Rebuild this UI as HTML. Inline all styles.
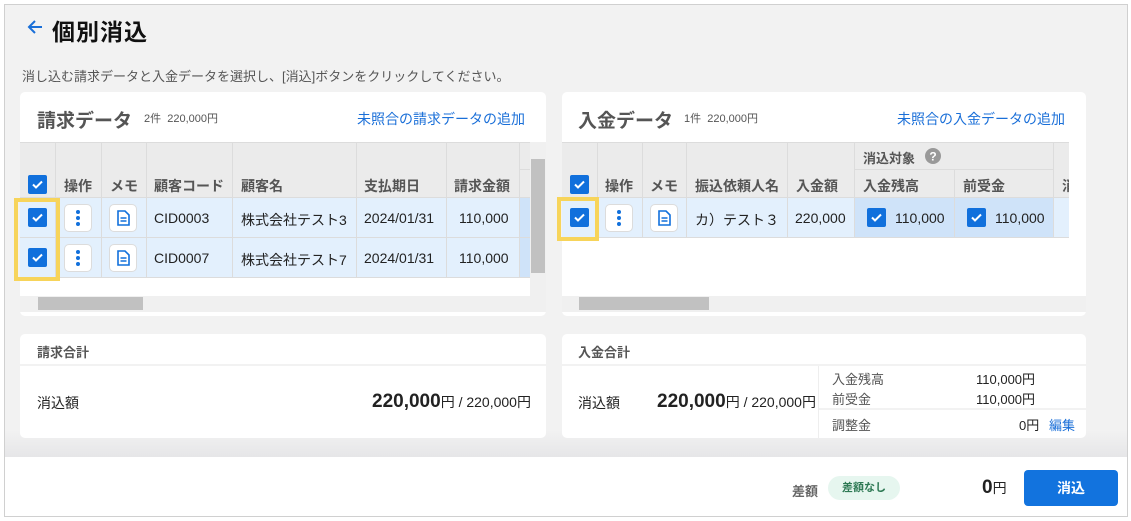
<!DOCTYPE html>
<html><head><meta charset="utf-8"><style>
*{box-sizing:border-box;margin:0;padding:0}
body{width:1131px;height:521px;background:#fff;font-family:"Liberation Sans","Noto Sans CJK JP",sans-serif;color:#222;position:relative;overflow:hidden;font-size:14px}
.a{position:absolute}
.frame{left:4px;top:4px;width:1124px;height:513px;border:1px solid #d0d0d0;background:#f2f2f2}
.footer{left:5px;top:457px;width:1122px;height:59px;background:#fff}
.shade{left:5px;top:430px;width:1122px;height:27px;background:linear-gradient(#f2f2f2,#e6e6e8)}
.panel{background:#fff;border-radius:5px}
.cb{position:absolute;width:19px;height:19px;background:#1170dc;border-radius:2px}
.cb svg{position:absolute;left:2px;top:2px}
.btn{position:absolute;width:28px;height:28px;border:1px solid #dcdcdc;border-radius:5px;background:#fff}
.th{position:absolute;font-size:14px;font-weight:bold;color:#555}
.td{position:absolute;font-size:14px;color:#222}
.vl{position:absolute;width:1px;background:#dcdcdc}
.hl{position:absolute;height:1px;background:#dcdcdc}
.lnk{color:#1a6fd8;font-size:14px}
</style></head><body>
<div class="a frame"></div>
<div class="a shade"></div>
<div class="a footer"></div>

<svg class="a" style="left:26px;top:18px" width="18" height="18" viewBox="0 0 18 18"><path d="M16 9H3M9 3L3 9l6 6" stroke="#1a6fd8" stroke-width="2" fill="none"/></svg>
<div class="a" style="left:52px;top:13px;font-size:23px;font-weight:bold;color:#111;letter-spacing:1px">個別消込</div>
<div class="a" style="left:22px;top:66px;font-size:13px;color:#555">消し込む請求データと入金データを選択し、[消込]ボタンをクリックしてください。</div>

<!-- LEFT PANEL -->
<div class="a panel" style="left:20px;top:92px;width:526px;height:224px"></div>
<div class="a" style="left:37px;top:106px;font-size:19px;font-weight:bold;color:#555">請求データ</div>
<div class="a" style="left:144px;top:110px;font-size:11px;color:#555">2件&nbsp;&nbsp;220,000円</div>
<div class="a lnk" style="left:357px;top:109px">未照合の請求データの追加</div>
<div class="a" style="left:20px;top:142px;width:510px;height:56px;background:#ebebeb"></div>
<div class="hl" style="left:20px;top:142px;width:510px"></div>
<div class="hl" style="left:20px;top:197px;width:510px"></div>
<div class="a" style="left:20px;top:198px;width:510px;height:80px;background:#e3f0fd"></div>
<div class="a" style="left:519px;top:198px;width:11px;height:80px;background:#cfe3f9"></div>
<div class="hl" style="left:20px;top:237px;width:510px"></div>
<div class="hl" style="left:20px;top:277px;width:510px"></div>
<div class="hl" style="left:519px;top:169px;width:11px"></div>
<div class="vl" style="left:55px;top:142px;height:136px"></div>
<div class="vl" style="left:101px;top:142px;height:136px"></div>
<div class="vl" style="left:146px;top:142px;height:136px"></div>
<div class="vl" style="left:232px;top:142px;height:136px"></div>
<div class="vl" style="left:356px;top:142px;height:136px"></div>
<div class="vl" style="left:446px;top:142px;height:136px"></div>
<div class="vl" style="left:519px;top:142px;height:136px"></div>
<div class="cb" style="left:28px;top:175px"><svg width="15" height="15"><path d="M3 7.5l3 3 6-6" stroke="#fff" stroke-width="2" fill="none"/></svg></div>
<div class="th" style="left:64px;top:176px">操作</div>
<div class="th" style="left:110px;top:176px">メモ</div>
<div class="th" style="left:154px;top:176px">顧客コード</div>
<div class="th" style="left:241px;top:176px">顧客名</div>
<div class="th" style="left:364px;top:176px">支払期日</div>
<div class="th" style="left:454px;top:176px">請求金額</div>
<div class="a" style="left:14px;top:198px;width:46px;height:83px;border:4px solid #f7d45a"></div>
<div class="cb" style="left:28px;top:208px"><svg width="15" height="15"><path d="M3 7.5l3 3 6-6" stroke="#fff" stroke-width="2" fill="none"/></svg></div>
<div class="cb" style="left:28px;top:248px"><svg width="15" height="15"><path d="M3 7.5l3 3 6-6" stroke="#fff" stroke-width="2" fill="none"/></svg></div>
<div class="btn" style="left:64px;top:204px"><svg width="26" height="26"><circle cx="13" cy="7" r="2" fill="#1170dc"/><circle cx="13" cy="13" r="2" fill="#1170dc"/><circle cx="13" cy="19" r="2" fill="#1170dc"/></svg></div>
<div class="btn" style="left:109px;top:204px"><svg width="26" height="26"><path d="M8 6h7l4 4v10H8z" stroke="#1170dc" stroke-width="1.6" fill="none"/><path d="M10.5 13h6M10.5 16h6" stroke="#1170dc" stroke-width="1.4"/></svg></div>
<div class="btn" style="left:64px;top:244px"><svg width="26" height="26"><circle cx="13" cy="7" r="2" fill="#1170dc"/><circle cx="13" cy="13" r="2" fill="#1170dc"/><circle cx="13" cy="19" r="2" fill="#1170dc"/></svg></div>
<div class="btn" style="left:109px;top:244px"><svg width="26" height="26"><path d="M8 6h7l4 4v10H8z" stroke="#1170dc" stroke-width="1.6" fill="none"/><path d="M10.5 13h6M10.5 16h6" stroke="#1170dc" stroke-width="1.4"/></svg></div>
<div class="td" style="left:154px;top:210px">CID0003</div>
<div class="td" style="left:241px;top:210px">株式会社テスト3</div>
<div class="td" style="left:364px;top:210px">2024/01/31</div>
<div class="td" style="left:459px;top:210px">110,000</div>
<div class="td" style="left:154px;top:250px">CID0007</div>
<div class="td" style="left:241px;top:250px">株式会社テスト7</div>
<div class="td" style="left:364px;top:250px">2024/01/31</div>
<div class="td" style="left:459px;top:250px">110,000</div>
<div class="a" style="left:530px;top:142px;width:16px;height:154px;background:#f0f0f0"></div>
<div class="a" style="left:531px;top:159px;width:14px;height:114px;background:#c1c1c1"></div>
<div class="a" style="left:20px;top:296px;width:510px;height:16px;background:#f0f0f0"></div>
<div class="a" style="left:38px;top:297px;width:105px;height:13px;background:#c1c1c1"></div>
<div class="a" style="left:530px;top:296px;width:16px;height:16px;background:#f0f0f0"></div>

<!-- RIGHT PANEL -->
<div class="a panel" style="left:562px;top:92px;width:524px;height:224px"></div>
<div class="a" style="left:578px;top:106px;font-size:19px;font-weight:bold;color:#555">入金データ</div>
<div class="a" style="left:684px;top:110px;font-size:11px;color:#555">1件&nbsp;&nbsp;220,000円</div>
<div class="a lnk" style="left:897px;top:109px">未照合の入金データの追加</div>
<div class="a" style="left:562px;top:142px;width:507px;height:56px;background:#ebebeb"></div>
<div class="hl" style="left:562px;top:142px;width:507px"></div>
<div class="hl" style="left:562px;top:197px;width:507px"></div>
<div class="hl" style="left:854px;top:169px;width:199px"></div>
<div class="a" style="left:562px;top:198px;width:507px;height:40px;background:#e3f0fd"></div>
<div class="a" style="left:854px;top:198px;width:199px;height:40px;background:#cfe3f9"></div>
<div class="hl" style="left:562px;top:237px;width:507px"></div>
<div class="vl" style="left:597px;top:142px;height:96px"></div>
<div class="vl" style="left:642px;top:142px;height:96px"></div>
<div class="vl" style="left:686px;top:142px;height:96px"></div>
<div class="vl" style="left:787px;top:142px;height:96px"></div>
<div class="vl" style="left:854px;top:142px;height:96px"></div>
<div class="vl" style="left:954px;top:169px;height:69px"></div>
<div class="vl" style="left:1053px;top:142px;height:96px"></div>
<div class="cb" style="left:570px;top:175px"><svg width="15" height="15"><path d="M3 7.5l3 3 6-6" stroke="#fff" stroke-width="2" fill="none"/></svg></div>
<div class="th" style="left:605px;top:176px">操作</div>
<div class="th" style="left:650px;top:176px">メモ</div>
<div class="th" style="left:695px;top:176px">振込依頼人名</div>
<div class="th" style="left:796px;top:176px">入金額</div>
<div class="th" style="left:863px;top:148px;font-size:13px">消込対象</div>
<svg class="a" style="left:925px;top:148px" width="16" height="16"><circle cx="8" cy="8" r="8" fill="#999"/><text x="8" y="12.5" text-anchor="middle" font-size="12" font-weight="bold" fill="#fff" font-family="Liberation Sans">?</text></svg>
<div class="th" style="left:863px;top:176px">入金残高</div>
<div class="th" style="left:963px;top:176px">前受金</div>
<div class="th" style="left:1062px;top:176px;width:7px;overflow:hidden">消</div>
<div class="a" style="left:557px;top:197px;width:42px;height:44px;border:4px solid #f7d45a"></div>
<div class="cb" style="left:570px;top:208px"><svg width="15" height="15"><path d="M3 7.5l3 3 6-6" stroke="#fff" stroke-width="2" fill="none"/></svg></div>
<div class="btn" style="left:605px;top:204px"><svg width="26" height="26"><circle cx="13" cy="7" r="2" fill="#1170dc"/><circle cx="13" cy="13" r="2" fill="#1170dc"/><circle cx="13" cy="19" r="2" fill="#1170dc"/></svg></div>
<div class="btn" style="left:650px;top:204px"><svg width="26" height="26"><path d="M8 6h7l4 4v10H8z" stroke="#1170dc" stroke-width="1.6" fill="none"/><path d="M10.5 13h6M10.5 16h6" stroke="#1170dc" stroke-width="1.4"/></svg></div>
<div class="td" style="left:695px;top:210px">カ）テスト３</div>
<div class="td" style="left:795px;top:210px">220,000</div>
<div class="cb" style="left:867px;top:208px"><svg width="15" height="15"><path d="M3 7.5l3 3 6-6" stroke="#fff" stroke-width="2" fill="none"/></svg></div>
<div class="td" style="left:895px;top:210px">110,000</div>
<div class="cb" style="left:967px;top:208px"><svg width="15" height="15"><path d="M3 7.5l3 3 6-6" stroke="#fff" stroke-width="2" fill="none"/></svg></div>
<div class="td" style="left:995px;top:210px">110,000</div>
<div class="a" style="left:1069px;top:142px;width:17px;height:170px;background:#fff"></div>
<div class="a" style="left:562px;top:296px;width:524px;height:16px;background:#f0f0f0"></div>
<div class="a" style="left:579px;top:297px;width:130px;height:13px;background:#c1c1c1"></div>

<!-- SUMMARY LEFT -->
<div class="a panel" style="left:20px;top:334px;width:526px;height:104px"></div>
<div class="hl" style="left:20px;top:364px;width:526px;height:2px;background:#f2f2f2"></div>
<div class="a" style="left:37px;top:342px;font-size:13px;font-weight:bold;color:#555">請求合計</div>
<div class="a" style="left:37px;top:393px;font-size:14px">消込額</div>
<div class="a" style="left:372px;top:391px;font-size:14px;white-space:nowrap"><span style="font-size:19px;font-weight:bold">220,000</span>円 / 220,000円</div>

<!-- SUMMARY RIGHT -->
<div class="a panel" style="left:562px;top:334px;width:524px;height:104px"></div>
<div class="hl" style="left:562px;top:364px;width:524px;height:2px;background:#f2f2f2"></div>
<div class="vl" style="left:818px;top:366px;height:72px;background:#eee"></div>
<div class="hl" style="left:819px;top:408px;width:267px;height:2px;background:#f2f2f2"></div>
<div class="a" style="left:578px;top:342px;font-size:13px;font-weight:bold;color:#555">入金合計</div>
<div class="a" style="left:578px;top:393px;font-size:14px">消込額</div>
<div class="a" style="left:657px;top:391px;font-size:14px;white-space:nowrap"><span style="font-size:19px;font-weight:bold">220,000</span>円 / 220,000円</div>
<div class="a" style="left:832px;top:369px;font-size:13px;color:#555">入金残高</div>
<div class="a" style="left:976px;top:369px;font-size:13px">110,000円</div>
<div class="a" style="left:832px;top:389px;font-size:13px;color:#555">前受金</div>
<div class="a" style="left:976px;top:389px;font-size:13px">110,000円</div>
<div class="a" style="left:832px;top:415px;font-size:13px;color:#555">調整金</div>
<div class="a" style="left:1019px;top:415px;font-size:13px">0円</div>
<div class="a" style="left:1049px;top:415px;font-size:13px;color:#1a6fd8">編集</div>

<!-- FOOTER -->
<div class="a" style="left:792px;top:481px;font-size:13px;font-weight:bold;color:#666">差額</div>
<div class="a" style="left:828px;top:476px;width:72px;height:24px;border-radius:12px;background:#e6f6ef;color:#2f7a55;font-size:11px;font-weight:bold;text-align:center;line-height:24px">差額なし</div>
<div class="a" style="left:982px;top:477px;font-size:14px"><span style="font-size:19px;font-weight:bold">0</span>円</div>
<div class="a" style="left:1024px;top:470px;width:94px;height:36px;border-radius:4px;background:#1273de;color:#fff;font-size:14px;font-weight:bold;text-align:center;line-height:36px">消込</div>
</body></html>
